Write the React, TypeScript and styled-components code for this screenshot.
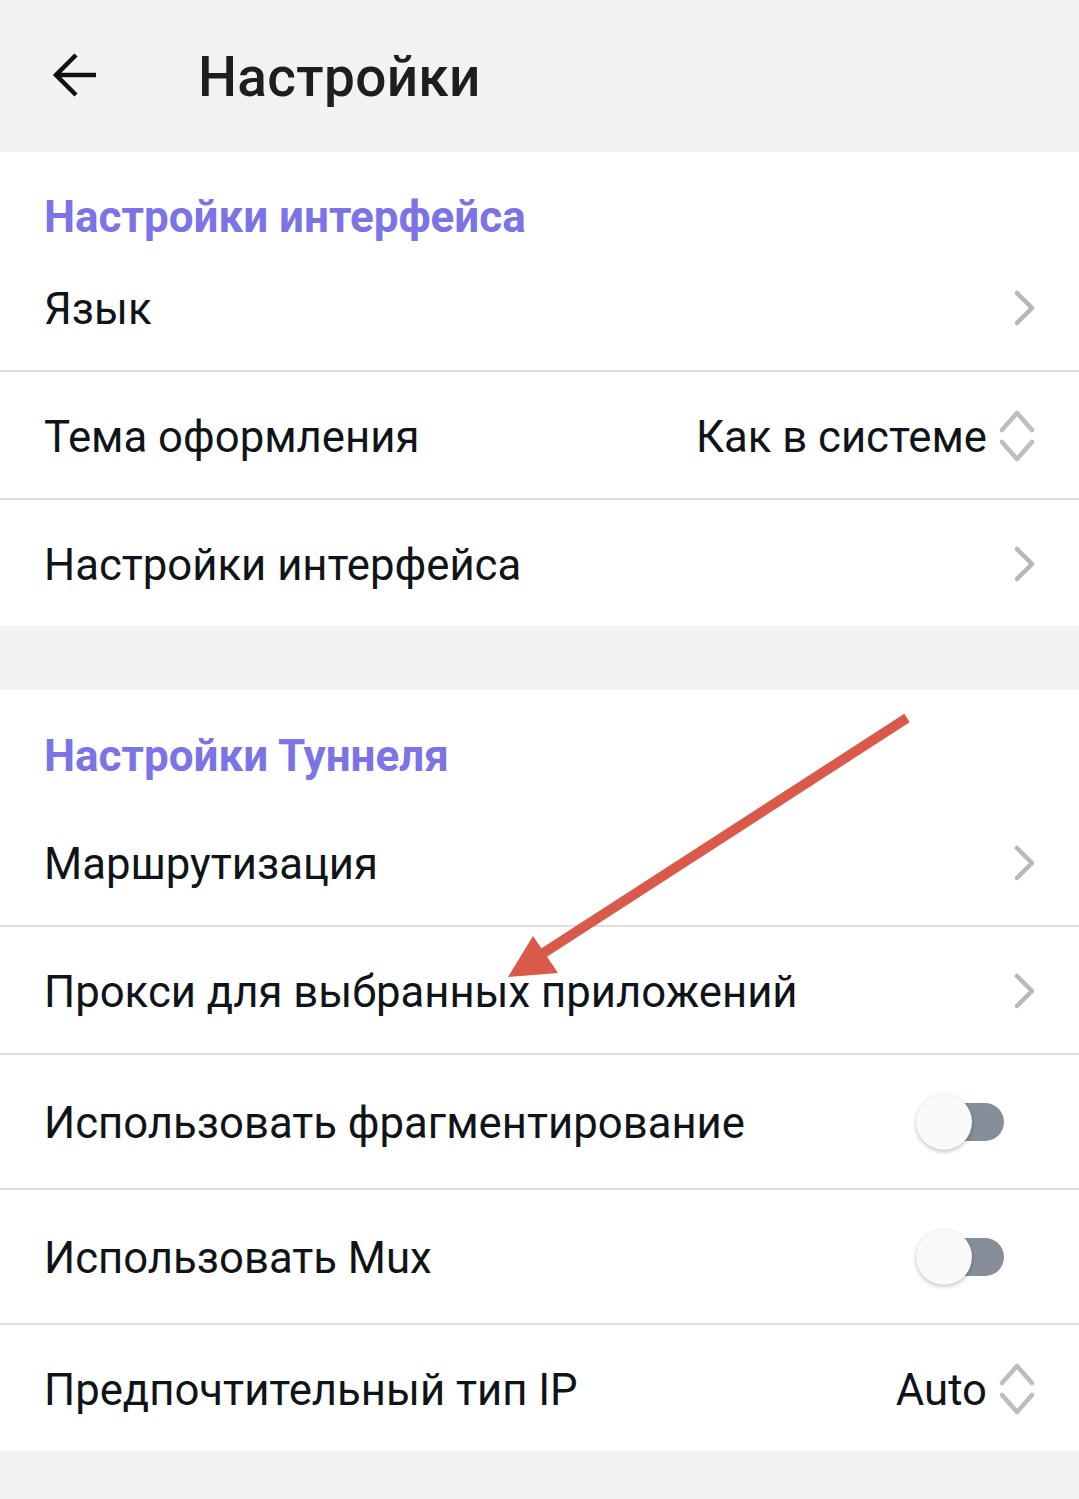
import React from "react";
import styled, { createGlobalStyle } from "styled-components";

const GlobalStyle = createGlobalStyle`
  html, body {
    margin: 0;
    padding: 0;
    background: #f2f2f2;
    font-family: Roboto, "Noto Sans", "Liberation Sans", sans-serif;
  }
  * { box-sizing: border-box; }
`;

const Page = styled.div`
  position: relative;
  width: 1079px;
  min-height: 1499px;
  background: #f2f2f2;
`;

const Header = styled.header`
  height: 152px;
  display: flex;
  align-items: center;
  padding-left: 51px;
  background: #f2f2f2;
`;

const BackButton = styled.div`
  width: 48px;
  height: 48px;
  display: flex;
  align-items: center;
  justify-content: center;
  margin-right: 99px;
  margin-top: -2px;
`;

const HeaderTitle = styled.h1`
  margin: 0;
  font-size: 55px;
  font-weight: 500;
  color: #1e1e1e;
  letter-spacing: 0.3px;
  line-height: 1;
  margin-top: 2px;
`;

const Section = styled.section<{ $gap?: number }>`
  background: #ffffff;
  margin-top: ${(p) => p.$gap ?? 0}px;
`;

const SectionTitle = styled.div<{ $height: number; $top: number }>`
  height: ${(p) => p.$height}px;
  padding: ${(p) => p.$top}px 0 0 44px;
  font-size: 44px;
  line-height: 50px;
  font-weight: 700;
  color: #7b73e6;
`;

const Row = styled.div<{ $height: number; $last?: boolean }>`
  height: ${(p) => p.$height + (p.$last ? 0 : 2)}px;
  display: flex;
  align-items: center;
  padding: 3px 44px 0 44px;
  border-bottom: ${(p) => (p.$last ? "none" : "2px solid #dedede")};
`;

const Label = styled.div`
  flex: 1;
  font-size: 43.7px;
  color: #0f1419;
  white-space: nowrap;
`;

const Value = styled.div`
  font-size: 43.7px;
  color: #0f1419;
  margin-right: 12px;
  white-space: nowrap;
`;

const IconBox = styled.div`
  display: flex;
  align-items: center;
  margin-top: -2px;
`;

const Toggle = styled.div`
  position: relative;
  width: 88px;
  height: 56px;
  margin-right: 31px;
  margin-top: -3px;
`;

const Track = styled.div`
  position: absolute;
  right: 0;
  top: 9px;
  width: 74px;
  height: 38px;
  border-radius: 19px;
  background: #858e99;
`;

const Knob = styled.div`
  position: absolute;
  left: 0;
  top: 0;
  width: 56px;
  height: 56px;
  border-radius: 50%;
  background: #fafafa;
  box-shadow: 0 2px 4px rgba(0, 0, 0, 0.22), 0 0 1px rgba(0, 0, 0, 0.12);
`;

const Overlay = styled.svg`
  position: absolute;
  left: 0;
  top: 0;
  pointer-events: none;
`;

const BackIcon = () => (
  <svg width="46" height="46" viewBox="0 0 46 46">
    <path
      d="M44 23 H4 M24 3 L4 23 L24 43"
      fill="none"
      stroke="#111"
      strokeWidth="4.5"
    />
  </svg>
);

const ChevronRight = () => (
  <svg width="21" height="36" viewBox="0 0 21 36">
    <polyline
      points="3,3 18,18 3,33"
      fill="none"
      stroke="#b8b8b8"
      strokeWidth="4.5"
      strokeLinecap="round"
      strokeLinejoin="round"
    />
  </svg>
);

const UpDown = () => (
  <svg width="36" height="54" viewBox="0 0 36 54">
    <polyline
      points="3,21 18,4 33,21"
      fill="none"
      stroke="#bdbdbd"
      strokeWidth="4.5"
      strokeLinecap="round"
      strokeLinejoin="round"
    />
    <polyline
      points="3,33 18,50 33,33"
      fill="none"
      stroke="#bdbdbd"
      strokeWidth="4.5"
      strokeLinecap="round"
      strokeLinejoin="round"
    />
  </svg>
);

const Switch = () => (
  <Toggle>
    <Track />
    <Knob />
  </Toggle>
);

type RowKind = "chevron" | "select" | "toggle";

interface Item {
  label: string;
  kind: RowKind;
  value?: string;
  height: number;
}

const SettingRow: React.FC<{ item: Item; last?: boolean }> = ({ item, last }) => (
  <Row $height={item.height} $last={last}>
    <Label>{item.label}</Label>
    {item.kind === "chevron" && (
      <IconBox>
        <ChevronRight />
      </IconBox>
    )}
    {item.kind === "select" && (
      <>
        <Value>{item.value}</Value>
        <IconBox>
          <UpDown />
        </IconBox>
      </>
    )}
    {item.kind === "toggle" && <Switch />}
  </Row>
);

const interfaceItems: Item[] = [
  { label: "Язык", kind: "chevron", height: 126 },
  { label: "Тема оформления", kind: "select", value: "Как в системе", height: 126 },
  { label: "Настройки интерфейса", kind: "chevron", height: 126 },
];

const tunnelItems: Item[] = [
  { label: "Маршрутизация", kind: "chevron", height: 126 },
  { label: "Прокси для выбранных приложений", kind: "chevron", height: 126 },
  { label: "Использовать фрагментирование", kind: "toggle", height: 133 },
  { label: "Использовать Mux", kind: "toggle", height: 133 },
  { label: "Предпочтительный тип IP", kind: "select", value: "Auto", height: 126 },
];

export default function App() {
  return (
    <Page>
      <GlobalStyle />
      <Header>
        <BackButton>
          <BackIcon />
        </BackButton>
        <HeaderTitle>Настройки</HeaderTitle>
      </Header>

      <Section>
        <SectionTitle $height={92} $top={40}>
          Настройки интерфейса
        </SectionTitle>
        {interfaceItems.map((it, i) => (
          <SettingRow key={it.label} item={it} last={i === interfaceItems.length - 1} />
        ))}
      </Section>

      <Section $gap={64}>
        <SectionTitle $height={109} $top={41}>
          Настройки Туннеля
        </SectionTitle>
        {tunnelItems.map((it, i) => (
          <SettingRow key={it.label} item={it} last={i === tunnelItems.length - 1} />
        ))}
      </Section>

      <Overlay width="1079" height="1499" viewBox="0 0 1079 1499">
        <line x1="907" y1="718" x2="528" y2="963" stroke="#d9594b" strokeWidth="10" />
        <polygon points="508,977 533,936 558,973" fill="#d9594b" />
      </Overlay>
    </Page>
  );
}
